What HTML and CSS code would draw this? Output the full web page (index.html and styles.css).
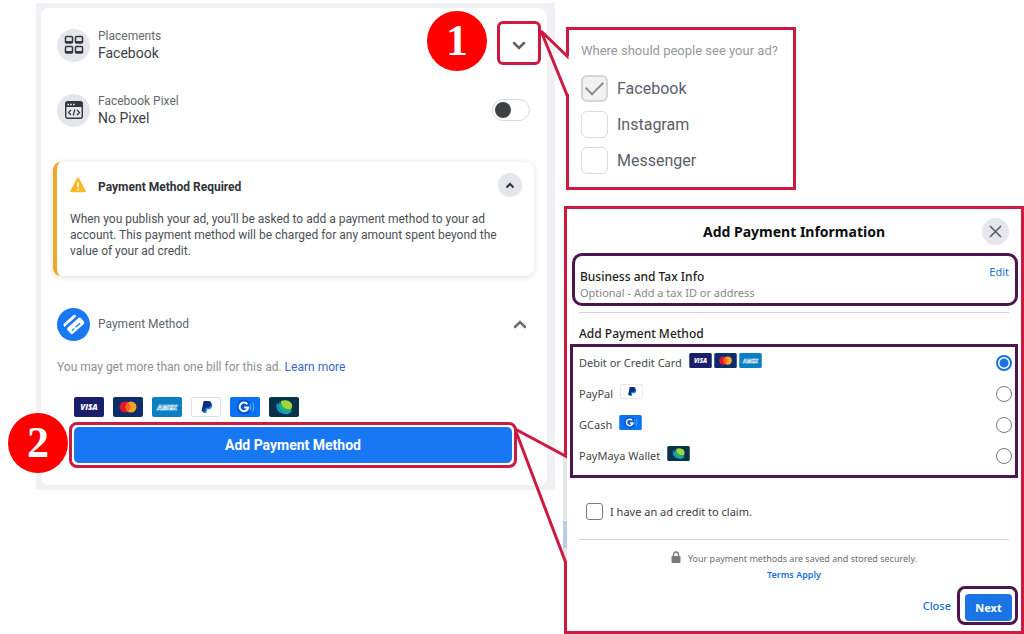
FILE: index.html
```html
<!DOCTYPE html>
<html lang="en">
<head>
    <meta charset="UTF-8">
    <meta name="viewport" content="width=device-width, initial-scale=1.0">
    <title>Add Payment Method</title>
    <link rel="stylesheet" href="styles.css">
</head>
<body>
    <!-- shared card logos -->
    <svg class="sprite" aria-hidden="true">
        <symbol id="visa" viewBox="0 0 30 20">
            <rect width="30" height="20" rx="2" fill="#1a1f6b"/>
            <text x="15" y="13" text-anchor="middle" class="logo-text logo-visa">VISA</text>
        </symbol>
        <symbol id="mastercard" viewBox="0 0 30 20">
            <rect width="30" height="20" rx="2" fill="#0d2c6c"/>
            <circle cx="12" cy="10" r="5.5" fill="#e3172c"/>
            <circle cx="18" cy="10" r="5.5" fill="#f9a32b"/>
            <path d="M15 5.4a5.5 5.5 0 0 1 0 9.2a5.5 5.5 0 0 1 0-9.2z" fill="#f26522"/>
        </symbol>
        <symbol id="amex" viewBox="0 0 30 20">
            <rect width="30" height="20" rx="2" fill="#0c7fc2"/>
            <text x="15" y="13" text-anchor="middle" class="logo-text logo-amex">AMEX</text>
        </symbol>
        <symbol id="paypal" viewBox="0 0 30 20">
            <rect x="0.5" y="0.5" width="29" height="19" rx="2" fill="#fff" stroke="#d9dce2"/>
            <path d="M13.5 6h5c2.3 0 3.200 1.500 2.600 3.500-.5 2-1.900 2.800-3.900 2.800h-1.200l-.7 3.700h-3.200z" fill="#1b87cf"/>
            <path d="M12.600 4h4.700c2.400 0 3.500 1.400 3 3.600-.5 2.300-2 3.200-4.200 3.200h-1.600l-.7 3.700h-3.300z" fill="#0d2f7e"/>
        </symbol>
        <symbol id="gcash" viewBox="0 0 30 20">
            <rect width="30" height="20" rx="2" fill="#0b72f5"/>
            <circle cx="14" cy="10" r="7.500" fill="#0655c9"/>
            <path d="M17.300 7.200a4.300 4.300 0 1 0 .9 3.300h-4" fill="none" stroke="#fff" stroke-width="2"/>
            <path d="M20 6.800q1.800 3.200 0 6.400M22.600 5.500q2.600 4.500 0 9" fill="none" stroke="#69b4ff" stroke-width="1"/>
        </symbol>
        <symbol id="paymaya" viewBox="0 0 30 20">
            <rect width="30" height="20" rx="2" fill="#07324a"/>
            <path d="M8 6c-2 5 1 10 7 11 4 .7 7-.5 8-3-6 1-10-1-12-4-.8-1.300-1.200-3-3-4z" fill="#1592c8"/>
            <path d="M11 4.500c-3 4 0 9.500 5 10.500 3 .6 5.500 0 7-2-6 0-10-3-12-8.500z" fill="#17b07c"/>
            <path d="M12 4c3-1.800 10-.8 11 3.500.4 2.200-.3 4-1.300 5.200C16 13 11.500 9.500 12 4z" fill="#9bd63f"/>
        </symbol>
    </svg>

    <main class="page">
        <section class="panel">
            <div class="card">
                <div class="setting">
                    <span class="icon-circle">
                        <svg width="20" height="20" viewBox="0 0 20 20" fill="none" stroke="#35373b" stroke-width="1.500">
                            <rect x="1.500" y="1.500" width="7" height="6.500" rx="1"/>
                            <rect x="11.500" y="1.500" width="7" height="6.500" rx="1"/>
                            <rect x="1.500" y="11.500" width="7" height="6.500" rx="1"/>
                            <rect x="11.500" y="11.500" width="7" height="6.500" rx="1"/>
                            <path d="M1.500 7h7M11.500 7h7M1.500 17h7M11.500 17h7" stroke-width="2"/>
                        </svg>
                    </span>
                    <div class="setting-text">
                        <span class="setting-label">Placements</span>
                        <span class="setting-value">Facebook</span>
                    </div>
                    <span class="step step-one">1</span>
                    <button type="button" class="expand" aria-label="Show placements">
                        <svg width="14" height="9" viewBox="0 0 14 9"><path d="M2 2l5 5 5-5" fill="none" stroke="#5f6267" stroke-width="2.500" stroke-linecap="round"/></svg>
                    </button>
                </div>

                <div class="setting">
                    <span class="icon-circle">
                        <svg width="20" height="20" viewBox="0 0 20 20" fill="none">
                            <rect x="1.700" y="1.700" width="16.600" height="16.600" rx="2" stroke="#35373b" stroke-width="1.400"/>
                            <path d="M1.700 2h16.600v5H1.700z" fill="#35373b"/>
                            <path d="M3.500 4.500h1.500M6.300 4.500h1.500M9.100 4.500h1.500" stroke="#fff" stroke-width="1.400"/>
                            <path d="M7 10l-2.500 2.500L7 15M13 10l2.500 2.500L13 15M10.800 9.500l-1.600 6" stroke="#35373b" stroke-width="1.200"/>
                        </svg>
                    </span>
                    <div class="setting-text">
                        <label class="setting-label" for="pixel">Facebook Pixel</label>
                        <span class="setting-value">No Pixel</span>
                    </div>
                    <input type="checkbox" class="toggle" id="pixel">
                </div>

                <div class="alert">
                    <div class="alert-head">
                        <svg width="16" height="16" viewBox="0 0 16 16">
                            <path d="M8 1.500l6.800 12.700H1.200z" fill="#f7b928" stroke="#f7b928" stroke-width="2" stroke-linejoin="round"/>
                            <path d="M8 5.500v4.500M8 11.700v1.600" stroke="#fff" stroke-width="1.600"/>
                        </svg>
                        <h3>Payment Method Required</h3>
                        <button type="button" class="collapse" aria-label="Collapse">
                            <svg width="10" height="7" viewBox="0 0 10 7"><path d="M1.500 5.500L5 2l3.500 3.500" fill="none" stroke="#303338" stroke-width="2"/></svg>
                        </button>
                    </div>
                    <p>When you publish your ad, you'll be asked to add a payment method to your ad account. This payment method will be charged for any amount spent beyond the value of your ad credit.</p>
                </div>

                <div class="setting payment">
                    <span class="icon-circle icon-blue">
                        <svg width="24" height="24" viewBox="0 0 24 24">
                            <g transform="rotate(-42 12 12)">
                                <path d="M5 5h12a2 2 0 0 1 2 2v.8H3V7a2 2 0 0 1 2-2z" fill="#fff"/>
                                <rect x="3" y="10.500" width="18" height="8" rx="2" fill="#fff"/>
                                <path d="M6 15.500h3M11 15.500h6" stroke="#1877f2" stroke-width="1.300"/>
                            </g>
                        </svg>
                    </span>
                    <span class="payment-title">Payment Method</span>
                    <button type="button" class="plain" aria-label="Collapse payment method">
                        <svg width="14" height="9" viewBox="0 0 14 9"><path d="M2 7l5-5 5 5" fill="none" stroke="#6a6d72" stroke-width="2.500" stroke-linecap="round"/></svg>
                    </button>
                </div>

                <p class="bill-note">You may get more than one bill for this ad. <a href="#">Learn more</a></p>

                <div class="logos">
                    <svg><use href="#visa"/></svg>
                    <svg><use href="#mastercard"/></svg>
                    <svg><use href="#amex"/></svg>
                    <svg><use href="#paypal"/></svg>
                    <svg><use href="#gcash"/></svg>
                    <svg><use href="#paymaya"/></svg>
                </div>

                <div class="add-ring">
                    <span class="step step-two">2</span>
                    <button type="button" class="add-button">Add Payment Method</button>
                </div>
            </div>
        </section>

        <div class="side">
            <fieldset class="callout">
                <svg class="pointer pointer-one" width="32" height="72" viewBox="0 0 32 72">
                    <path d="M27 29h5v38h-5z" fill="#fff"/>
                    <path d="M28 69V68L2 4l26 25v-3" fill="none" stroke="#cc1a40" stroke-width="3"/>
                </svg>
                <p>Where should people see your ad?</p>
                <label><input type="checkbox" checked> Facebook</label>
                <label><input type="checkbox"> Instagram</label>
                <label><input type="checkbox"> Messenger</label>
            </fieldset>

            <section class="dialog">
                <svg class="pointer pointer-two" width="54" height="140" viewBox="0 0 54 140">
                    <path d="M49 29h4v107h-4z" fill="#e6e6e8"/>
                    <path d="M49 94h4v27h-4z" fill="#bccbe6"/>
                    <path d="M51.500 138v-3L1 2l50.500 27v-4" fill="none" stroke="#cc1a40" stroke-width="3"/>
                </svg>
                <header class="dialog-head">
                    <h2>Add Payment Information</h2>
                    <button type="button" class="close-icon" aria-label="Close">
                        <svg width="13" height="13" viewBox="0 0 13 13"><path d="M1 1l11 11M12 1L1 12" stroke="#5c5f64" stroke-width="1.600"/></svg>
                    </button>
                </header>

                <div class="tax-info">
                    <div>
                        <h3>Business and Tax Info</h3>
                        <p>Optional - Add a tax ID or address</p>
                    </div>
                    <a href="#">Edit</a>
                </div>

                <hr>

                <h3 class="method-title">Add Payment Method</h3>
                <div class="methods">
                    <label>Debit or Credit Card
                        <span class="mini-logos">
                            <svg><use href="#visa"/></svg>
                            <svg><use href="#mastercard"/></svg>
                            <svg><use href="#amex"/></svg>
                        </span>
                        <input type="radio" name="method" checked>
                    </label>
                    <label>PayPal
                        <span class="mini-logos"><svg><use href="#paypal"/></svg></span>
                        <input type="radio" name="method">
                    </label>
                    <label>GCash
                        <span class="mini-logos"><svg><use href="#gcash"/></svg></span>
                        <input type="radio" name="method">
                    </label>
                    <label>PayMaya Wallet
                        <span class="mini-logos"><svg><use href="#paymaya"/></svg></span>
                        <input type="radio" name="method">
                    </label>
                </div>

                <label class="credit"><input type="checkbox"> I have an ad credit to claim.</label>

                <hr>

                <div class="secure">
                    <p>
                        <svg width="10" height="13" viewBox="0 0 10 13"><path d="M2.500 6V3.500a2.500 2.500 0 0 1 5 0V6" fill="none" stroke="#77797d" stroke-width="1.400"/><rect x="0.500" y="5" width="9" height="7" rx="1" fill="#77797d"/></svg>
                        Your payment methods are saved and stored securely.
                    </p>
                    <a href="#">Terms Apply</a>
                </div>

                <footer class="dialog-foot">
                    <button type="button" class="close-button">Close</button>
                    <div class="next-ring">
                        <button type="button" class="next-button">Next</button>
                    </div>
                </footer>
            </section>
        </div>
    </main>
</body>
</html>
```
FILE: styles.css
```css
* {
    box-sizing: border-box;
}
body {
    margin: 0;
    background: white;
    font-family: Roboto, "Liberation Sans", sans-serif;
    font-size: 12px;
    line-height: 16px;
    color: #4b4f56;
}
h2, h3, p {
    margin: 0;
}
button {
    padding: 0;
    border: none;
    background: none;
    font: inherit;
    cursor: pointer;
}
input {
    appearance: none;
    flex: none;
    margin: 0;
    background: white;
}
a {
    color: #1b6fd8;
    text-decoration: none;
}
svg {
    display: block;
    flex: none;
}
.sprite {
    display: none;
}
.logo-text {
    font-family: "Open Sans", sans-serif;
    font-style: italic;
    font-weight: 800;
    fill: white;
}
.logo-visa { font-size: 8px; }
.logo-amex {
    font-size: 7px;
    fill: #0c7fc2;
    stroke: white;
    stroke-width: 0.6px;
}
.page {
    display: grid;
    grid-template-columns: minmax(0, 519fr) minmax(0, 460fr);
    gap: 9px;
    align-items: start;
    padding-left: 36px;
}

/* left panel */
.panel {
    margin-top: 3px;
    padding: 5px 8px 5px 5px;
    background: #f0f1f5;
}
.card {
    padding: 20px 17px 17px 16px;
    border-radius: 8px;
    background: white;
}
.setting {
    position: relative;
    display: flex;
    align-items: center;
    gap: 8px;
    height: 34px;
    margin-bottom: 31px;
}
.icon-circle {
    display: grid;
    place-items: center;
    width: 33px;
    height: 33px;
    border-radius: 50%;
    background: #e4e6eb;
}
.icon-blue {
    background: #1877f2;
}
.setting-text {
    display: flex;
    flex-direction: column;
    flex: 1;
}
.setting-label {
    color: #65686d;
    line-height: 16px;
}
.setting-value {
    font-size: 14px;
    line-height: 18px;
    color: #3e4147;
}
.expand {
    display: grid;
    place-items: center;
    width: 44px;
    height: 44px;
    margin: -12px -11px -8px 0;
    padding-top: 4px;
    border: 3px solid #cc1a40;
    border-radius: 6px;
}
.step {
    position: absolute;
    width: 60px;
    height: 60px;
    border-radius: 50%;
    background: #fe0000;
    color: white;
    font: bold 44px/60px "Liberation Serif", serif;
    text-align: center;
}
.step-one {
    top: -17px;
    right: 43px;
}
.step-two {
    top: -12px;
    left: -64px;
}
.toggle {
    width: 38px;
    height: 22px;
    padding: 2px;
    border: 1px solid #d8dade;
    border-radius: 11px;
}
.toggle::before {
    content: "";
    display: block;
    width: 16px;
    height: 16px;
    border-radius: 50%;
    background: #3f4043;
}
.toggle:checked::before {
    margin-left: 16px;
}
.alert {
    margin: 35px -4px 31px;
    padding: 11px 12px 17px 13px;
    border-left: 4px solid #eba925;
    border-radius: 8px;
    box-shadow: 0 1px 6px rgba(0, 0, 0, 0.14);
}
.alert-head {
    display: flex;
    align-items: center;
    gap: 12px;
    margin-bottom: 14px;
}
.alert-head h3 {
    flex: 1;
    padding-top: 3px;
    font-size: 12px;
    font-weight: 700;
    color: #303338;
}
.collapse {
    display: grid;
    place-items: center;
    width: 24px;
    height: 24px;
    border-radius: 50%;
    background: #e4e6eb;
}
.payment {
    margin-bottom: 18px;
}
.payment-title {
    flex: 1;
    color: #606770;
}
.plain {
    padding: 0 3px;
}
.bill-note {
    color: #8d9094;
}
.bill-note a {
    color: #3b66c4;
}
.logos {
    display: flex;
    gap: 9px;
    margin: 22px 17px 5px;
}
.logos svg {
    width: 30px;
    height: 20px;
}
.add-ring {
    position: relative;
    margin: 0 13px 0 12px;
    padding: 2px;
    border: 3px solid #cc1a40;
    border-radius: 8px;
}
.add-button {
    display: block;
    width: 100%;
    height: 36px;
    border-radius: 5px;
    background: #1877f2;
    color: white;
    font-size: 14px;
    font-weight: 700;
}

/* placements callout */
.callout {
    position: relative;
    display: flex;
    flex-direction: column;
    gap: 9px;
    width: 230px;
    margin: 27px 0 16px 2px;
    padding: 13px 12px;
    border: 3px solid #cc1a40;
}
.callout p {
    margin-bottom: 7px;
    font-size: 13px;
    color: #96999e;
    white-space: nowrap;
}
.callout label {
    display: flex;
    align-items: center;
    gap: 9px;
    font-size: 16px;
    color: #5b5e6b;
}
.callout input {
    width: 27px;
    height: 27px;
    border: 1px solid #d9dbdf;
    border-radius: 6px;
}
.callout input:checked {
    display: grid;
    place-items: center;
    border: 2px solid #d4d5d8;
    background: #f1f1f2;
}
.callout input:checked::before {
    content: "";
    width: 15px;
    height: 8px;
    margin-bottom: 6px;
    border: solid #8b8d91;
    border-width: 0 0 2px 2px;
    transform: rotate(-45deg);
}
.pointer {
    position: absolute;
}
.pointer-one {
    top: -3px;
    left: -30px;
}
.pointer-two {
    top: 218px;
    left: -53px;
}

/* payment dialog */
.dialog {
    position: relative;
    padding: 9px 12px 6px;
    border: 3px solid #cc1a40;
    font-family: "Noto Sans", "Open Sans", sans-serif;
    font-size: 11px;
}
.dialog h3 {
    font-size: 12px;
    font-weight: 500;
    color: #1c1e21;
}
.dialog hr {
    height: 1px;
    margin: 0;
    border: none;
    background: #d5d5d8;
}
.dialog-head {
    display: grid;
    grid-template-columns: 27px 1fr 27px;
    align-items: center;
}
.dialog-head h2 {
    grid-column: 2;
    font-size: 14px;
    font-weight: 700;
    color: #0c0d0f;
    text-align: center;
}
.close-icon {
    display: grid;
    place-items: center;
    width: 27px;
    height: 27px;
    border-radius: 50%;
    background: #e4e6eb;
}
.tax-info {
    display: flex;
    justify-content: space-between;
    margin: 8px -9px 6px -7px;
    padding: 8px 6px 2px 5px;
    border: 3px solid #4b154d;
    border-radius: 10px;
}
.tax-info div {
    padding-top: 5px;
}
.tax-info p {
    color: #85878b;
}
.method-title {
    margin: 13px 0 2px;
}
.methods {
    margin: 0 -9px 25px;
    padding: 0 3px 4px 6px;
    border: 3px solid #4b154d;
}
.methods label {
    display: flex;
    align-items: center;
    gap: 7px;
    height: 31px;
    color: #45474b;
}
.methods input {
    width: 16px;
    height: 16px;
    margin-left: auto;
    border: 1px solid #76787c;
    border-radius: 50%;
}
.methods input:checked {
    border: 2px solid #1873de;
    background: radial-gradient(circle, #1873de 4px, white 5px);
}
.mini-logos {
    display: flex;
    gap: 2px;
    margin-bottom: 4px;
}
.mini-logos svg {
    width: 23px;
    height: 15px;
}
.credit {
    display: flex;
    align-items: center;
    gap: 7px;
    margin: 0 0 19px 7px;
    color: #3a3c40;
}
.credit input {
    width: 17px;
    height: 17px;
    border: 1px solid #77797d;
    border-radius: 3px;
}
.secure {
    margin: 11px 0 12px;
    font-size: 9px;
    text-align: center;
}
.secure p {
    display: flex;
    justify-content: center;
    gap: 7px;
    color: #6c6e72;
}
.secure a {
    font-weight: 600;
}
.dialog-foot {
    display: flex;
    justify-content: flex-end;
    align-items: center;
    gap: 6px;
    margin: -9px -9px 0 0;
}
.close-button {
    color: #1b6fd8;
    font-weight: 500;
}
.next-ring {
    padding: 5px 3px 1px 5px;
    border: 3px solid #4b154d;
    border-radius: 8px;
}
.next-button {
    display: block;
    width: 47px;
    height: 27px;
    border-radius: 4px;
    background: #1b74e4;
    color: white;
    font-weight: 700;
}
```
